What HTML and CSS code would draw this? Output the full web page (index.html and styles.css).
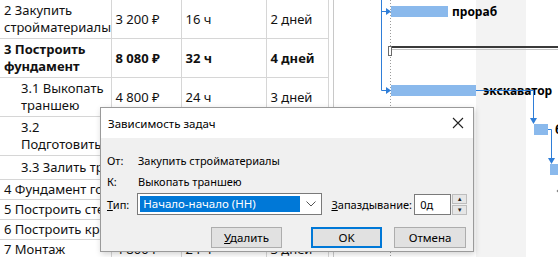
FILE: index.html
```html
<html>
    <head>
        <title>Зависимость задач</title>
        <meta charset="utf-8">
        <link rel="stylesheet" href="styles.css">
    </head>
    <body>
        <main class="project">
            <table class="sheet">
                <colgroup>
                    <col class="c-name">
                    <col class="c-cost">
                    <col class="c-work">
                    <col class="c-dur">
                </colgroup>
                <tr class="row-two">
                    <td>2 Закупить стройматериалы</td>
                    <td>3 200 ₽</td>
                    <td>16 ч</td>
                    <td>2 дней</td>
                </tr>
                <tr class="row-two summary">
                    <td>3 Построить фундамент</td>
                    <td>8 080 ₽</td>
                    <td>32 ч</td>
                    <td>4 дней</td>
                </tr>
                <tr class="row-two">
                    <td class="sub">3.1 Выкопать траншею</td>
                    <td>4 800 ₽</td>
                    <td>24 ч</td>
                    <td>3 дней</td>
                </tr>
                <tr class="row-two">
                    <td class="sub">3.2 Подготовить</td>
                    <td></td>
                    <td></td>
                    <td></td>
                </tr>
                <tr class="row-mid">
                    <td class="sub nowrap">3.3 Залить траншею</td>
                    <td></td>
                    <td></td>
                    <td></td>
                </tr>
                <tr class="row-one">
                    <td class="nowrap">4 Фундамент готов</td>
                    <td></td>
                    <td></td>
                    <td></td>
                </tr>
                <tr class="row-one">
                    <td class="nowrap">5 Построить стены</td>
                    <td></td>
                    <td></td>
                    <td></td>
                </tr>
                <tr class="row-one">
                    <td class="nowrap">6 Построить крышу</td>
                    <td></td>
                    <td></td>
                    <td></td>
                </tr>
                <tr class="row-one">
                    <td class="nowrap">7 Монтаж</td>
                    <td>4 800 ₽</td>
                    <td>24 ч</td>
                    <td>3 дней</td>
                </tr>
            </table>
            <div class="split"></div>
            <div class="gantt">
                <svg width="225" height="257" viewBox="0 0 225 257">
                    <rect x="142" y="0" width="50" height="257" fill="#f3f3f3"/>
                    <line x1="56.5" y1="0" x2="56.5" y2="257" stroke="#9b9b9b" stroke-dasharray="1 2"/>

                    <!-- связи от задачи 2 -->
                    <path d="M47.5 0 V90.5 M47.5 11.5 H52 M47.5 90.5 H52" stroke="#2f7ed8" fill="none"/>
                    <path d="M52 8 L57 11.5 L52 15 Z" fill="#2f7ed8"/>
                    <path d="M52 87 L57 90.5 L52 94 Z" fill="#2f7ed8"/>

                    <rect x="57" y="6" width="57" height="11" fill="#8ab9ec"/>
                    <text class="res" x="118" y="16">прораб</text>

                    <!-- суммарная задача -->
                    <line x1="56" y1="47" x2="225" y2="47" stroke="#3a3a3a" stroke-width="2"/>
                    <line x1="58" y1="49.5" x2="225" y2="49.5" stroke="#c4c4c4"/>
                    <rect x="54.5" y="46.5" width="3" height="9" fill="#fff" stroke="#6a6a6a"/>

                    <rect x="57" y="85" width="85" height="11" fill="#8ab9ec"/>
                    <text class="res" x="149" y="95">экскаватор</text>
                    <path d="M142 90.5 H199.5 V119" stroke="#2f7ed8" fill="none"/>
                    <path d="M196 118 L203 118 L199.5 124 Z" fill="#2f7ed8"/>

                    <rect x="200" y="124" width="14" height="11" fill="#8ab9ec"/>
                    <text class="res" x="221" y="134">б</text>
                    <path d="M214 129.5 H217.5 V159" stroke="#2f7ed8" fill="none"/>
                    <path d="M214 158 L221 158 L217.5 164 Z" fill="#2f7ed8"/>

                    <rect x="216" y="164" width="10" height="11" fill="#8ab9ec"/>
                    <circle cx="224" cy="191" r="1.3" fill="#8a8a8a"/>
                </svg>
            </div>
        </main>

        <section class="dialog">
            <header class="dialog-title">
                <span>Зависимость задач</span>
                <svg class="close" width="12" height="12" viewBox="0 0 12 12">
                    <path d="M1 1 L11 11 M11 1 L1 11" stroke="#222" stroke-width="1.1"/>
                </svg>
            </header>
            <div class="dialog-body">
                <div class="field">
                    <span class="label">От:</span>
                    <span>Закупить стройматериалы</span>
                </div>
                <div class="field">
                    <span class="label">К:</span>
                    <span>Выкопать траншею</span>
                </div>
                <div class="field field-type">
                    <span class="label"><u>Т</u>ип:</span>
                    <div class="select">
                        <span class="select-value">Начало-начало (НН)</span>
                        <svg class="chevron" width="10" height="6" viewBox="0 0 10 6">
                            <path d="M0.5 0.5 L5 5 L9.5 0.5" stroke="#555" fill="none"/>
                        </svg>
                    </div>
                    <span class="lag-label"><u>З</u>апаздывание:</span>
                    <div class="lag">0д</div>
                    <div class="spin">
                        <span>▲</span>
                        <span>▼</span>
                    </div>
                </div>
                <div class="buttons">
                    <button class="btn btn-delete"><u>У</u>далить</button>
                    <button class="btn btn-ok">OK</button>
                    <button class="btn btn-cancel">Отмена</button>
                </div>
            </div>
        </section>
    </body>
</html>
```
FILE: styles.css
```css
body{
    margin: 0;
    width: 558px;
    height: 257px;
    overflow: hidden;
    position: relative;
    background: #fff;
    font-family: "Noto Sans", "Open Sans", sans-serif;
}
.project{
    display: flex;
    height: 257px;
}

/* таблица задач */
.sheet{
    border-collapse: collapse;
    table-layout: fixed;
    width: 328px;
    margin-top: -1px;
    align-self: flex-start;
    font-size: 13px;
    line-height: 17px;
    color: #111;
}
.c-name{ width: 111px; }
.c-cost{ width: 70px; }
.c-work{ width: 85px; }
.c-dur{ width: 62px; }
.sheet td{
    border: 1px solid #d6d6d6;
    border-left: none;
    padding: 0 3px 0 4px;
    vertical-align: middle;
    overflow: hidden;
    white-space: nowrap;
}
.sheet td:first-child{
    white-space: normal;
}
.sheet td.nowrap{
    white-space: nowrap;
}
.sheet td.sub{
    padding-left: 21px;
}
.row-two{ height: 39px; }
.row-mid{ height: 24px; }
.row-one{ height: 20px; }
.summary td{
    font-weight: bold;
}
.split{
    width: 4px;
    border-right: 1px solid #c8c8c8;
}

/* диаграмма */
.gantt{
    flex: 1;
    overflow: hidden;
}
.gantt svg{
    display: block;
}
.res{
    font-family: "Noto Sans", sans-serif;
    font-weight: bold;
    font-size: 12px;
    fill: #000;
}

/* диалог */
.dialog{
    position: absolute;
    left: 100px;
    top: 107px;
    width: 372px;
    height: 143px;
    border: 1px solid #9a9a9a;
    box-shadow: 1px 2px 6px rgba(0,0,0,0.18);
    background: #f0f0f0;
    font-size: 11px;
    color: #000;
    display: flex;
    flex-direction: column;
}
.dialog-title{
    height: 30px;
    background: #fff;
    display: flex;
    align-items: center;
    justify-content: space-between;
    padding: 0 9px 0 7px;
    font-size: 11.5px;
}
.close{
    display: block;
}
.dialog-body{
    padding: 14px 6px 0 6px;
    display: flex;
    flex-direction: column;
}
.field{
    display: flex;
    align-items: center;
    height: 16px;
    margin-bottom: 5px;
}
.label{
    width: 31px;
}
.field-type{
    height: 22px;
    margin-top: -1px;
    margin-bottom: 0;
}
.select{
    width: 181px;
    height: 20px;
    border: 1px solid #7a7a7a;
    background: #fff;
    display: flex;
    align-items: center;
    padding: 0 5px 0 2px;
}
.select-value{
    flex: 1;
    height: 16px;
    line-height: 16px;
    background: #0078d7;
    color: #fff;
    padding-left: 3px;
    margin-right: 6px;
    font-size: 11.5px;
}
.chevron{
    display: block;
}
.lag-label{
    margin-left: 9px;
    width: 85px;
    white-space: nowrap;
}
.lag{
    width: 31px;
    height: 19px;
    line-height: 19px;
    border: 1px solid #7a7a7a;
    background: #fff;
    padding-left: 5px;
}
.spin{
    margin-left: 1px;
    width: 15px;
    height: 21px;
    display: flex;
    flex-direction: column;
    gap: 1px;
}
.spin span{
    flex: 1;
    background: #e6e6e6;
    border: 1px solid #bdbdbd;
    font-size: 6px;
    line-height: 8px;
    text-align: center;
    color: #222;
}
.buttons{
    display: flex;
    justify-content: flex-end;
    margin-top: 12px;
    padding-right: 1px;
}
.btn{
    width: 71px;
    height: 21px;
    background: #e1e1e1;
    border: 1px solid #adadad;
    font-family: "Noto Sans", "Open Sans", sans-serif;
    font-size: 11.5px;
    color: #000;
    padding: 0;
}
.btn-ok{
    margin-left: 29px;
    border: 2px solid #0078d7;
}
.btn-cancel{
    margin-left: 12px;
    width: 72px;
}
```
